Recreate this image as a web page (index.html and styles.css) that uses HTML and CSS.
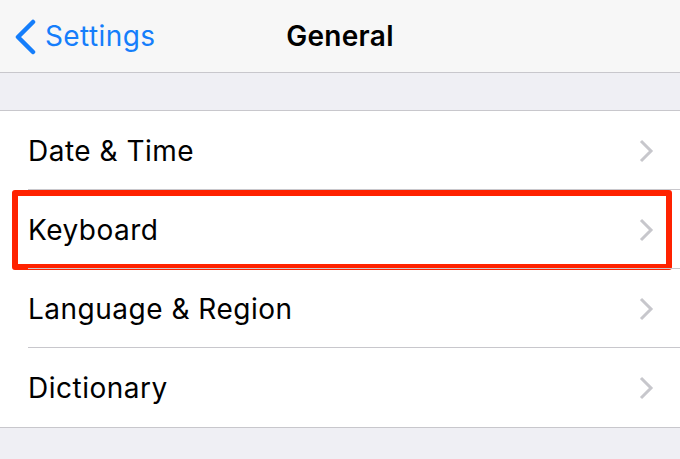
FILE: index.html
```html
<!DOCTYPE html>
<html>
<head>
<meta charset="utf-8">
<link rel="stylesheet" href="styles.css">
</head>
<body>
<div class="screen">
  <header class="nav">
    <div class="back">
      <svg class="back-icon" width="24" height="36" viewBox="0 0 24 36"><path d="M20 3 L5 18 L20 33" fill="none" stroke="#157efb" stroke-width="4.5" stroke-linecap="round" stroke-linejoin="round"/></svg>
      <span class="back-label">Settings</span>
    </div>
    <div class="title">General</div>
  </header>
  <div class="spacer"></div>
  <ul class="group">
    <li class="row"><span class="label">Date &amp; Time</span><svg class="chev" width="16" height="24" viewBox="0 0 16 24"><path d="M3 2 L13 12 L3 22" fill="none" stroke="#c7c7cc" stroke-width="3"/></svg></li>
    <li class="row highlighted"><span class="label">Keyboard</span><svg class="chev" width="16" height="24" viewBox="0 0 16 24"><path d="M3 2 L13 12 L3 22" fill="none" stroke="#c7c7cc" stroke-width="3"/></svg><span class="callout"></span></li>
    <li class="row"><span class="label">Language &amp; Region</span><svg class="chev" width="16" height="24" viewBox="0 0 16 24"><path d="M3 2 L13 12 L3 22" fill="none" stroke="#c7c7cc" stroke-width="3"/></svg></li>
    <li class="row last"><span class="label">Dictionary</span><svg class="chev" width="16" height="24" viewBox="0 0 16 24"><path d="M3 2 L13 12 L3 22" fill="none" stroke="#c7c7cc" stroke-width="3"/></svg></li>
  </ul>
</div>
</body>
</html>
```
FILE: styles.css
```css
* { box-sizing: border-box; }
html, body { margin: 0; padding: 0; }
body {
  width: 680px;
  height: 459px;
  overflow: hidden;
  background: #efeff4;
  font-family: Inter, Roboto, "Liberation Sans", sans-serif;
  color: #000;
}
.screen { display: flex; flex-direction: column; }
.nav {
  height: 73px;
  background: #f7f7f7;
  border-bottom: 1px solid #c8c7cc;
  position: relative;
  display: flex;
  align-items: center;
}
.back {
  display: flex;
  align-items: center;
  padding-left: 13px;
  gap: 8px;
  color: #157efb;
  font-size: 28px;
  letter-spacing: 0.4px;
}
.back-icon { display: block; margin-top: 1px; }
.title {
  position: absolute;
  left: 0;
  right: 0;
  text-align: center;
  font-weight: 600;
  font-size: 28px;
  letter-spacing: 0.3px;
  pointer-events: none;
}
.spacer { height: 38px; border-bottom: 1px solid #c8c7cc; }
.group {
  list-style: none;
  margin: 0;
  padding: 0;
  background: #fff;
  border-bottom: 1px solid #c8c7cc;
}
.row {
  position: relative;
  height: 79px;
  display: flex;
  align-items: center;
  justify-content: space-between;
  padding: 0 26px 0 28px;
  font-size: 28px;
  letter-spacing: 0.5px;
}
.row::after {
  content: "";
  position: absolute;
  left: 28px;
  right: 0;
  bottom: 0;
  height: 1px;
  background: #c8c7cc;
}
.row.last::after { display: none; }
.chev { display: block; }
.callout {
  position: absolute;
  left: 12px;
  right: 8px;
  top: 0;
  bottom: -1px;
  border: 6px solid #ff2200;
  border-radius: 3px;
}
```
